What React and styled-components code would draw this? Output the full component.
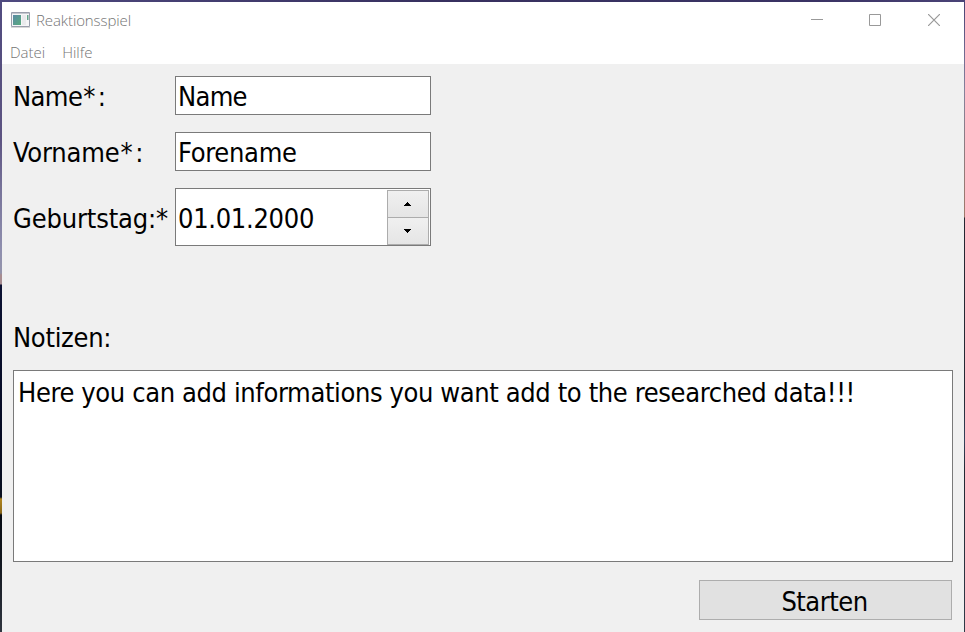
import React from 'react';
import styled, { createGlobalStyle } from 'styled-components';

const GlobalStyle = createGlobalStyle`
  * { box-sizing: border-box; }
  body { margin: 0; background: #3f3a6c; }
`;

const Desktop = styled.div`
  width: 965px;
  height: 632px;
  padding: 2px 1px 0 2px;
  overflow: hidden;
  background:
    linear-gradient(90deg, #4f4a80, #37305f 45%, #3a3364 85%, #4a4377) 0 0 / 100% 2px no-repeat,
    linear-gradient(180deg, #514b80 0, #57507f 80px, #5d5482 140px, #78749a 190px, #8f8fae 250px, #9494ab 273px, #a78c90 275px, #a78c90 284px, #0c1233 285px, #050a22 440px, #0a1020 497px, #b0851f 499px, #8a6718 513px, #060a12 515px, #11161f 560px, #30353f 632px) 0 0 / 2px 100% no-repeat,
    linear-gradient(180deg, #453f70 0, #6f6890 50px, #85819b 90px, #8d7c80 150px, #a0786a 217px, #252631 218px, #252a35 400px, #35425c 440px, #222833 470px, #303a48 632px) 100% 0 / 1px 100% no-repeat;
`;

const Window = styled.div`
  display: flex;
  flex-direction: column;
  height: 630px;
  background: #f0f0f0;
  color: #000;
  font: 27px/36px "DejaVu Sans Condensed", "DejaVu Sans", sans-serif;
`;

const TitleBar = styled.header`
  display: flex;
  align-items: center;
  height: 36px;
  padding: 0 1px 0 9px;
  background: #fff;
  color: #999;
  font: 300 15px/20px "Open Sans", sans-serif;
`;

const AppIcon = styled.svg`
  width: 19px;
  height: 16px;
  margin-right: 6px;
`;

const Title = styled.span`
  flex: 1;
  padding-bottom: 1px;
  color: #747474;
  letter-spacing: -0.1px;
`;

const WindowButton = styled.button`
  display: flex;
  align-items: center;
  justify-content: center;
  width: 58.5px;
  height: 36px;
  padding: 0;
  border: 0;
  background: none;
  color: #999;
`;

const MenuBar = styled.nav`
  display: flex;
  gap: 17px;
  height: 26px;
  padding: 4px 0 0 8px;
  background: #fff;
  color: #747474;
  font: 300 15px/20px "Open Sans", sans-serif;
`;

const Content = styled.main`
  display: flex;
  flex-direction: column;
  padding: 12px 11px 0;
`;

const Form = styled.div`
  display: grid;
  grid-template-columns: 162px 256px;
  grid-template-rows: 39px 39px 58px;
  row-gap: 17px;
  align-items: center;
`;

const Label = styled.label`
  letter-spacing: ${p => p.$spacing || 0}px;
  white-space: nowrap;
  padding-top: ${p => p.$drop || 2}px;
`;

const Star = styled.span`
  margin: 0 3px 0 1px;
`;

const Field = styled.div`
  display: flex;
  align-items: center;
  height: 100%;
  padding: 2px 1px 0 2px;
  border: 1px solid #7a7a7a;
  background: #fff;
`;

const Value = styled.span`
  flex: 1;
  letter-spacing: ${p => p.$spacing || 0}px;
`;

const DateField = styled(Field)`
  padding: 1px 1px 1px 2px;
`;

const DateValue = styled(Value)`
  padding-top: 4px;
`;

const Spinner = styled.div`
  display: grid;
  grid-template-rows: 28px 27px;
  width: 42px;
  height: 54px;
  align-self: flex-start;
`;

const SpinButton = styled.button`
  display: flex;
  align-items: center;
  justify-content: center;
  padding: 0 2px 0 0;
  border: 1px solid #acacac;
  background: linear-gradient(#f0f0f0, #e5e5e5);
  &:last-child { margin-top: -1px; }
`;

const NotesLabel = styled(Label)`
  margin-top: 72px;
`;

const Notes = styled.div`
  height: 192px;
  margin-top: 14px;
  padding: 4px 4px;
  border: 1px solid #7a7a7a;
  background: #fff;
  letter-spacing: -0.38px;
  white-space: nowrap;
`;

const StartButton = styled.button`
  align-self: flex-end;
  width: 253px;
  height: 40px;
  margin: 18px 1px 0 0;
  padding: 3px 2px 0 0;
  border: 1px solid #adadad;
  background: #e1e1e1;
  color: #000;
  font: inherit;
  letter-spacing: -0.5px;
`;

function Arrow({ down }) {
  return (
    <svg width="7" height="4" viewBox="0 0 7 4" shapeRendering="crispEdges">
      <path d={down ? 'M0 0h7v1H0zM1 1h5v1H1zM2 2h3v1H2zM3 3h1v1H3z' : 'M3 0h1v1H3zM2 1h3v1H2zM1 2h5v1H1zM0 3h7v1H0z'} />
    </svg>
  );
}

export default function App() {
  return (
    <Desktop>
      <GlobalStyle />
      <Window>
        <TitleBar>
          <AppIcon viewBox="0 0 19 16">
            <defs>
              <linearGradient id="screen" x2="1" y2="1">
                <stop offset="0" stopColor="#5b8aa5" />
                <stop offset="1" stopColor="#58ab7d" />
              </linearGradient>
            </defs>
            <path d="M.5.5h18v14H.5z" fill="#f5f5f7" stroke="#9a9eac" />
            <path d="M1 1.5h17" stroke="#c5c8cf" />
            <path d="M2 3h8v10H2z" fill="url(#screen)" />
            <path d="M11 3h4v10h-4z" fill="#e9eaec" />
            <path d="M16 3h1.5v5H16z" fill="#65a68c" />
            <path d="M0 15.5h19" stroke="#d8d8d8" />
          </AppIcon>
          <Title>Reaktionsspiel</Title>
          <WindowButton aria-label="Minimize">
            <svg width="12" height="12"><path d="M0 5.5h12" stroke="currentColor" /></svg>
          </WindowButton>
          <WindowButton aria-label="Maximize">
            <svg width="12" height="12"><path d="M.5.5h11v11H.5z" fill="none" stroke="currentColor" /></svg>
          </WindowButton>
          <WindowButton aria-label="Close">
            <svg width="12" height="12"><path d="m0 0 12 12M12 0 0 12" stroke="currentColor" strokeWidth="1.2" /></svg>
          </WindowButton>
        </TitleBar>
        <MenuBar>
          <span>Datei</span>
          <span>Hilfe</span>
        </MenuBar>
        <Content>
          <Form>
            <Label $spacing={-0.6}>Name<Star>*</Star>:</Label>
            <Field><Value $spacing={-0.7}>Name</Value></Field>
            <Label $spacing={-0.2}>Vorname<Star>*</Star>:</Label>
            <Field><Value $spacing={-0.3}>Forename</Value></Field>
            <Label $spacing={-0.15} $drop={4}>Geburtstag:*</Label>
            <DateField>
              <DateValue $spacing={-0.3}>01.01.2000</DateValue>
              <Spinner>
                <SpinButton aria-label="Up"><Arrow /></SpinButton>
                <SpinButton aria-label="Down"><Arrow down /></SpinButton>
              </Spinner>
            </DateField>
          </Form>
          <NotesLabel $spacing={-0.3}>Notizen:</NotesLabel>
          <Notes>Here you can add informations you want add to the researched data!!!</Notes>
          <StartButton>Starten</StartButton>
        </Content>
      </Window>
    </Desktop>
  );
}
